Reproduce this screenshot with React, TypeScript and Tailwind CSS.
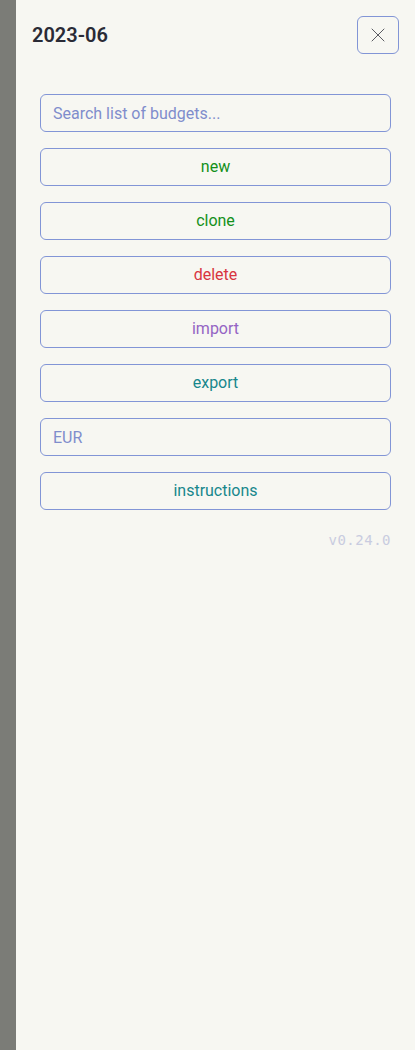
import { X } from "lucide-react";

const actions = [
  { label: "new", color: "text-[#14901a]" },
  { label: "clone", color: "text-[#14901a]" },
  { label: "delete", color: "text-[#d83440]" },
  { label: "import", color: "text-[#9464c4]" },
  { label: "export", color: "text-[#17878c]" },
];

const field =
  "h-[38px] w-full rounded-md border border-[#8295d6] bg-transparent px-3 text-base outline-none";

export default function App() {
  return (
    <div className="flex min-h-[1050px] bg-[#7b7c77] font-['Roboto',sans-serif]">
      <div className="w-4 shrink-0" />
      <div className="flex-1 bg-[#f7f7f2]">
        <div className="flex items-center justify-between px-4 pt-4">
          <h1 className="text-xl font-semibold text-[#2a2b36]">2023-06</h1>
          <button
            type="button"
            className="flex h-[38px] w-[42px] items-center justify-center rounded-md border border-[#8295d6] text-[#5a5b62]"
          >
            <X className="h-6 w-6" strokeWidth={1} />
          </button>
        </div>

        <div className="mt-10 flex flex-col gap-4 px-6">
          <input
            className={`${field} placeholder:text-[#7f8dcc]`}
            placeholder="Search list of budgets..."
          />
          {actions.map((a) => (
            <button key={a.label} type="button" className={`${field} ${a.color}`}>
              {a.label}
            </button>
          ))}
          <input className={`${field} placeholder:text-[#7f8dcc]`} placeholder="EUR" />
          <button type="button" className={`${field} text-[#17878c]`}>
            instructions
          </button>
        </div>

        <div className="mt-5 px-6 text-right font-['DejaVu_Sans_Mono',monospace] text-sm tracking-[0.5px] text-[#c9cce0]">
          v0.24.0
        </div>
      </div>
    </div>
  );
}
